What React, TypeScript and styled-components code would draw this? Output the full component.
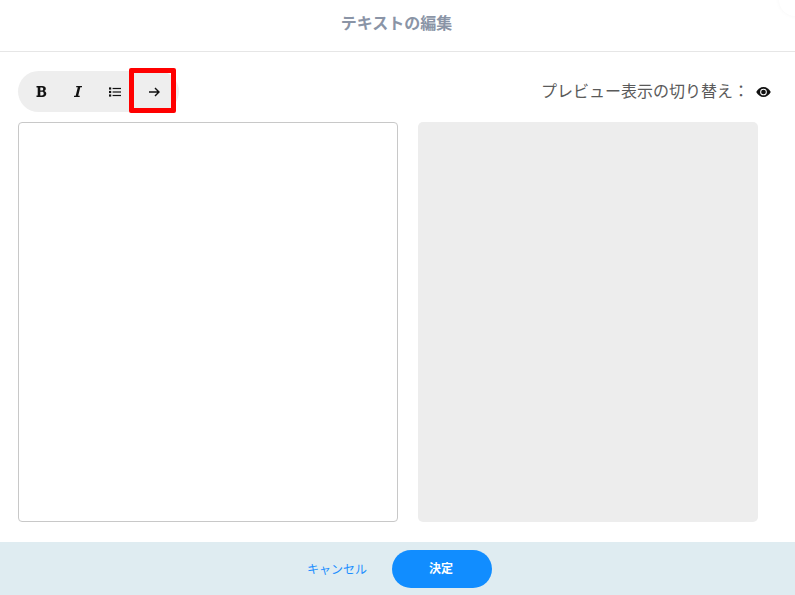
import React from "react";
import styled, { createGlobalStyle } from "styled-components";

const Global = createGlobalStyle`
  html, body { margin: 0; padding: 0; background: #fff; }
  * { box-sizing: border-box; }
`;

const FONT = `"Liberation Sans", "Noto Sans CJK JP", sans-serif`;

const Modal = styled.div`
  width: 795px;
  height: 595px;
  display: flex;
  flex-direction: column;
  overflow: hidden;
  position: relative;
  background: #fff;
  font-family: ${FONT};
`;

const Header = styled.header`
  height: 52px;
  flex: none;
  border-bottom: 1px solid #e6e6e6;
  display: flex;
  align-items: center;
  justify-content: center;
  padding: 0 2px 8px 0;
  color: #8a94a6;
  font-size: 16px;
  font-weight: 700;
`;

const Body = styled.main`
  flex: 1;
  padding: 19px 37px 20px 18px;
  display: flex;
  flex-direction: column;
  gap: 10px;
`;

const Toolbar = styled.div`
  height: 41px;
  display: flex;
  align-items: center;
  justify-content: space-between;
`;

const Pill = styled.div`
  width: 161px;
  height: 41px;
  padding-left: 5px;
  border-radius: 21px;
  background: #eeeeee;
  display: flex;
  align-items: center;
  position: relative;
`;

const ToolButton = styled.button<{ $width: number }>`
  width: ${(p) => p.$width}px;
  height: 41px;
  padding: 0;
  border: 0;
  background: none;
  display: flex;
  align-items: center;
  justify-content: center;
  color: #111;
`;

const Highlight = styled.span`
  position: absolute;
  left: 111px;
  top: -3px;
  width: 47px;
  height: 45px;
  border: 5px solid #ff0000;
  border-radius: 2px;
`;

const PreviewToggle = styled.div`
  display: flex;
  align-items: center;
  gap: 7px;
  color: #5a5a5a;
  font-size: 16px;
  margin-right: -13px;
`;

const PreviewLabel = styled.span`
  padding-bottom: 4px;
`;

const Panes = styled.div`
  flex: 1;
  display: flex;
  gap: 20px;
`;

const Editor = styled.div`
  width: 380px;
  border: 1px solid #c8c8c8;
  border-radius: 4px;
  background: #fff;
`;

const Preview = styled.div`
  width: 340px;
  border-radius: 5px;
  background: #ededed;
`;

const Footer = styled.footer`
  height: 53px;
  flex: none;
  background: #dfecf1;
  display: flex;
  align-items: center;
  justify-content: center;
  gap: 24px;
  padding-left: 4px;
`;

const CancelButton = styled.button`
  width: 61px;
  padding: 0 1px 0 0;
  border: 0;
  background: none;
  color: #1d8fff;
  font: 12px ${FONT};
  white-space: nowrap;
`;

const ConfirmButton = styled.button`
  width: 100px;
  height: 38px;
  padding: 0 2px 2px 0;
  border: 0;
  border-radius: 19px;
  background: #118dff;
  color: #fff;
  font: 700 12px ${FONT};
`;

const CornerShade = styled.span`
  position: absolute;
  top: -16px;
  right: -16px;
  width: 32px;
  height: 32px;
  border-radius: 50%;
  background: #fff;
  box-shadow: 0 0 4px rgba(0, 0, 0, 0.04);
`;

const Bold = () => (
  <svg width="11" height="11" viewBox="0 0 11 11" fill="currentColor" aria-hidden="true">
    <path fillRule="evenodd" d="M.5 0h5.800c2.200 0 3.500 1 3.500 2.700 0 1.100-.7 1.900-1.800 2.200 1.400.3 2.300 1.200 2.300 2.600C10.300 9.700 8.800 11 6.500 11H.5V9.600h1.200V1.400H.5V0zM4.300 1.400v3h1.300c1 0 1.600-.5 1.600-1.500s-.6-1.500-1.600-1.500H4.300zM4.300 5.700v3.900h1.600c1.200 0 1.800-.7 1.800-2s-.6-1.900-1.800-1.900H4.300z" />
  </svg>
);

const Italic = () => (
  <svg width="8" height="11" viewBox="0 0 8 11" fill="currentColor" aria-hidden="true">
    <path d="M2.200 0H8v1.300H6.300L4.200 9.700h1.500V11H0V9.700h1.700L3.800 1.300H2.200V0z" />
  </svg>
);

const List = () => (
  <svg width="12" height="10" viewBox="0 0 12 10" fill="currentColor" aria-hidden="true">
    <rect x="0" y="0.400" width="2.200" height="2.200" />
    <rect x="0" y="3.900" width="2.200" height="2.200" />
    <rect x="0" y="7.400" width="2.200" height="2.200" />
    <rect x="3.600" y="0.900" width="8.400" height="1.200" />
    <rect x="3.600" y="4.400" width="8.400" height="1.200" />
    <rect x="3.600" y="7.900" width="8.400" height="1.200" />
  </svg>
);

const Arrow = () => (
  <svg width="11" height="10" viewBox="0 0 11 10" fill="none" stroke="currentColor" strokeWidth="1.400" aria-hidden="true">
    <path d="M0 5h10M6 .9 10 5 6 9.100" />
  </svg>
);

const Eye = () => (
  <svg width="15" height="10" viewBox="0 0 16 11" aria-hidden="true">
    <path fill="#111" d="M8 0c3.500 0 6.300 2.300 8 5.500C14.300 8.700 11.500 11 8 11S1.700 8.700 0 5.500C1.700 2.300 4.500 0 8 0z" />
    <circle cx="8" cy="5.500" r="3.700" fill="#fff" />
    <circle cx="8" cy="5.500" r="2.600" fill="#111" />
  </svg>
);

export default function App() {
  return (
    <>
      <Global />
      <Modal>
        <CornerShade />
        <Header>テキストの編集</Header>
        <Body>
          <Toolbar>
            <Pill>
              <ToolButton $width={37}><Bold /></ToolButton>
              <ToolButton $width={35}><Italic /></ToolButton>
              <ToolButton $width={40}><List /></ToolButton>
              <ToolButton $width={38}><Arrow /></ToolButton>
              <Highlight />
            </Pill>
            <PreviewToggle>
              <PreviewLabel>プレビュー表示の切り替え：</PreviewLabel>
              <Eye />
            </PreviewToggle>
          </Toolbar>
          <Panes>
            <Editor />
            <Preview />
          </Panes>
        </Body>
        <Footer>
          <CancelButton>キャンセル</CancelButton>
          <ConfirmButton>決定</ConfirmButton>
        </Footer>
      </Modal>
    </>
  );
}
